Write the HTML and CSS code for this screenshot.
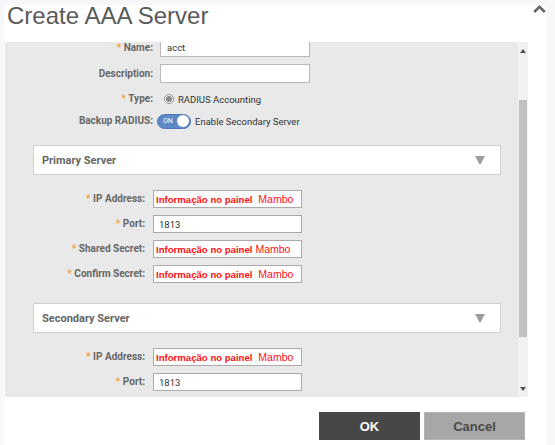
FILE: index.html
```html
<!DOCTYPE html>
<html>
<head>
<meta charset="utf-8">
<link rel="stylesheet" href="styles.css">
</head>
<body>
<div class="modal">
  <div class="header">
    <h1 class="title">Create AAA Server</h1>
    <svg class="collapse" width="13" height="8" viewBox="0 0 13 8"><polyline points="1.2,7 6.5,1.8 11.8,7" fill="none" stroke="#666" stroke-width="2.6"/></svg>
  </div>
  <div class="body-area">
    <div class="scroller">
      <div class="content">
        <div class="row top r1">
          <div class="lbl"><span class="req">*</span> Name:</div>
          <div class="field f-top"><span>acct</span></div>
        </div>
        <div class="row top r2">
          <div class="lbl">Description:</div>
          <div class="field f-top"></div>
        </div>
        <div class="row top r3">
          <div class="lbl"><span class="req">*</span> Type:</div>
          <div class="radio-wrap"><span class="radio"><span class="dot"></span></span><span class="txt">RADIUS Accounting</span></div>
        </div>
        <div class="row top r4">
          <div class="lbl">Backup RADIUS:</div>
          <div class="toggle-wrap"><span class="toggle"><span class="on">ON</span><span class="knob"></span></span><span class="txt">Enable Secondary Server</span></div>
        </div>

        <div class="panel p1">
          <span class="ptitle">Primary Server</span>
          <svg width="10" height="9" viewBox="0 0 10 9"><polygon points="0,0 10,0 5,9" fill="#9b9b9b"/></svg>
        </div>

        <div class="row sub s1">
          <div class="lbl"><span class="req">*</span> IP Address:</div>
          <div class="field f-sub red"><span><b>Informação no painel</b>&nbsp; Mambo</span></div>
        </div>
        <div class="row sub s2">
          <div class="lbl"><span class="req">*</span> Port:</div>
          <div class="field f-sub num"><span>1813</span></div>
        </div>
        <div class="row sub s2">
          <div class="lbl"><span class="req">*</span> Shared Secret:</div>
          <div class="field f-sub red"><span><b>Informação no painel</b> Mambo</span></div>
        </div>
        <div class="row sub s2">
          <div class="lbl"><span class="req">*</span> Confirm Secret:</div>
          <div class="field f-sub red"><span><b>Informação no painel</b>&nbsp; Mambo</span></div>
        </div>

        <div class="panel p2">
          <span class="ptitle">Secondary Server</span>
          <svg width="10" height="9" viewBox="0 0 10 9"><polygon points="0,0 10,0 5,9" fill="#9b9b9b"/></svg>
        </div>

        <div class="row sub s1">
          <div class="lbl"><span class="req">*</span> IP Address:</div>
          <div class="field f-sub red"><span><b>Informação no painel</b>&nbsp; Mambo</span></div>
        </div>
        <div class="row sub s2">
          <div class="lbl"><span class="req">*</span> Port:</div>
          <div class="field f-sub num"><span>1813</span></div>
        </div>
      </div>
    </div>
    <div class="scrollbar">
      <div class="sb-btn"><svg width="6" height="4" viewBox="0 0 6 4"><polygon points="0,4 3,0 6,4" fill="#505050"/></svg></div>
      <div class="sb-track"><div class="thumb"></div></div>
      <div class="sb-btn down"><svg width="6" height="4" viewBox="0 0 6 4"><polygon points="0,0 6,0 3,4" fill="#505050"/></svg></div>
    </div>
  </div>
  <div class="footer">
    <button class="btn ok">OK</button>
    <button class="btn cancel">Cancel</button>
  </div>
</div>
</body>
</html>
```
FILE: styles.css
```css
* { box-sizing: border-box; }
html, body { margin: 0; }
body {
  background: #f7f8fa;
  padding: 5px 8px 0 4px;
  width: 555px;
  height: 445px;
  overflow: hidden;
  font-family: Roboto, "Liberation Sans", Arial, sans-serif;
}
.modal {
  width: 543px;
  height: 440px;
  background: #fff;
  display: flex;
  flex-direction: column;
}
.header {
  display: flex;
  justify-content: space-between;
  align-items: flex-start;
  height: 37px;
  padding: 0 1px 0 3px;
  flex: none;
}
.title {
  margin: 0;
  padding-top: 1px;
  font: 400 24px/20px "Liberation Sans", Arial, sans-serif;
  color: #5a5a5a;
}
.collapse { display: block; margin-top: 0; }
.body-area {
  margin-left: 1px;
  width: 523px;
  height: 355px;
  background: #e9e9e9;
  display: flex;
  flex: none;
}
.scroller { flex: 1; overflow: hidden; }
.content { margin-top: -4px; }
.row { display: flex; align-items: center; }
.lbl {
  text-align: right;
  font: 700 10px/12px Roboto, "Liberation Sans", sans-serif;
  color: #676767;
  flex: none;
}
.req { color: #f0a23c; }
.top .lbl { width: 148px; margin-right: 7px; }
.sub .lbl { width: 140px; margin-right: 8px; }
.r1 { height: 19px; }
.r2 { height: 19px; margin-top: 7px; }
.r3 { height: 16px; margin-top: 8px; }
.r4 { height: 16px; margin-top: 6px; }
.s1 { height: 18px; margin-top: 15px; }
.s2 { height: 18px; margin-top: 7px; }
.field {
  width: 150px;
  height: 100%;
  background: #fff;
  border: 1px solid #ababab;
  display: flex;
  align-items: center;
  font: 400 9.5px Roboto, "Liberation Sans", sans-serif;
  color: #333;
  white-space: nowrap;
  overflow: hidden;
}
.f-top { padding-left: 6px; border-color: #b8b8b8; }
.f-sub { width: 149px; }
.num { padding-left: 5px; }
.red {
  padding-left: 2px;
  color: #ff1010;
  font: 400 10.5px "Liberation Sans", Arial, sans-serif;
}
.red b { font-size: 9.6px; font-weight: 700; }
.radio-wrap, .toggle-wrap {
  display: flex;
  align-items: center;
  font: 400 9.5px Roboto, "Liberation Sans", sans-serif;
  color: #333;
}
.radio-wrap { margin-left: 4px; }
.radio {
  width: 10px;
  height: 10px;
  border-radius: 50%;
  border: 1px solid #8d8d8d;
  background: #fafafa;
  display: flex;
  align-items: center;
  justify-content: center;
  margin-right: 4px;
}
.dot { width: 6px; height: 6px; border-radius: 50%; background: #8a8a8a; }
.toggle-wrap { margin-left: -3px; }
.toggle {
  width: 34px;
  height: 15px;
  border-radius: 8px;
  background: #5d89c7;
  border: 1px solid #4f7bbb;
  display: flex;
  align-items: center;
  justify-content: space-between;
  padding: 0 1px 0 5px;
  margin-right: 4px;
}
.on { color: #fff; font: 400 7px Roboto, sans-serif; }
.knob { width: 12px; height: 12px; border-radius: 50%; background: #fff; }
.panel {
  margin-left: 28px;
  width: 468px;
  height: 30px;
  background: #fff;
  border: 1px solid #d0d0d0;
  display: flex;
  align-items: center;
  justify-content: space-between;
  padding: 0 15px 0 8px;
}
.panel svg { display: block; }
.p1 { margin-top: 16px; }
.p2 { margin-top: 20px; }
.ptitle { font: 700 11px Roboto, "Liberation Sans", sans-serif; color: #666; }
.scrollbar {
  width: 10px;
  background: #f1f1f1;
  display: flex;
  flex-direction: column;
  flex: none;
}
.sb-btn { height: 11px; display: flex; align-items: flex-end; justify-content: center; }
.sb-btn.down { align-items: flex-start; height: 10px; }
.sb-btn svg { display: block; }
.sb-track { flex: 1; padding-top: 47px; }
.thumb { margin: 0 1px; height: 237px; background: #c1c1c1; }
.footer {
  display: flex;
  justify-content: flex-end;
  gap: 4px;
  padding: 15px 22px 0 0;
}
.btn {
  width: 101px;
  height: 28px;
  border: none;
  font: 700 13px "Liberation Sans", Arial, sans-serif;
  padding: 0;
}
.ok { background: #474747; color: #fff; }
.cancel { background: #a7a7a7; color: #4a4a4a; border: 1px solid #b3b3b3; }
```
